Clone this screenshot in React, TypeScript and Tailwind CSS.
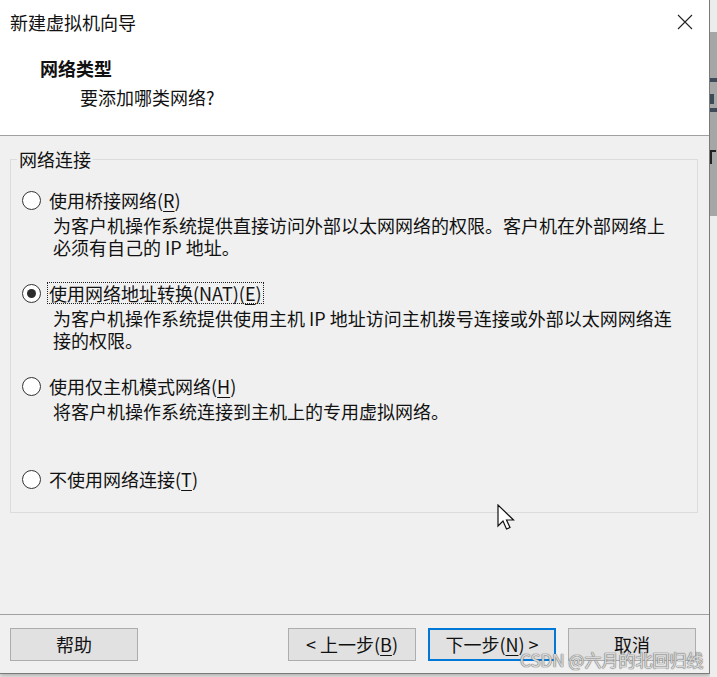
import type { ReactNode } from "react";

type NetOption = {
  id: string;
  label: ReactNode;
  desc: string[];
  checked?: boolean;
  focused?: boolean;
  gapTop: string;
};

function Key({ children }: { children: ReactNode }) {
  return <span className="underline decoration-1 underline-offset-[3px]">{children}</span>;
}

const options: NetOption[] = [
  {
    id: "bridged",
    label: (
      <>
        使用桥接网络(<Key>R</Key>)
      </>
    ),
    desc: ["为客户机操作系统提供直接访问外部以太网网络的权限。客户机在外部网络上", "必须有自己的 IP 地址。"],
    gapTop: "mt-0",
  },
  {
    id: "nat",
    label: (
      <>
        使用网络地址转换(NAT)(<Key>E</Key>)
      </>
    ),
    desc: ["为客户机操作系统提供使用主机 IP 地址访问主机拨号连接或外部以太网网络连", "接的权限。"],
    checked: true,
    focused: true,
    gapTop: "mt-[24px]",
  },
  {
    id: "hostonly",
    label: (
      <>
        使用仅主机模式网络(<Key>H</Key>)
      </>
    ),
    desc: ["将客户机操作系统连接到主机上的专用虚拟网络。"],
    gapTop: "mt-[24px]",
  },
  {
    id: "none",
    label: (
      <>
        不使用网络连接(<Key>T</Key>)
      </>
    ),
    desc: [],
    gapTop: "mt-[46px]",
  },
];

function Radio({ checked }: { checked?: boolean }) {
  return (
    <span className="flex h-[19px] w-[19px] shrink-0 items-center justify-center rounded-full border border-[#333] bg-white">
      {checked ? <span className="h-[9px] w-[9px] rounded-full bg-[#2b2b2b]" /> : null}
    </span>
  );
}

function OptionRow({ opt }: { opt: NetOption }) {
  return (
    <div className={opt.gapTop}>
      <div className="flex h-[22px] items-center gap-[6px]">
        <Radio checked={opt.checked} />
        <span
          className={
            opt.focused
              ? "border border-dotted border-[#222] px-px leading-[20px]"
              : "border border-transparent px-px leading-[20px]"
          }
        >
          {opt.label}
        </span>
      </div>
      {opt.desc.length > 0 ? (
        <div className="mt-[3px] pl-[31px]">
          {opt.desc.map((line) => (
            <p key={line} className="leading-[22px] whitespace-nowrap">
              {line}
            </p>
          ))}
        </div>
      ) : null}
    </div>
  );
}

function Button({ children, primary }: { children: ReactNode; primary?: boolean }) {
  return (
    <button
      type="button"
      className={
        primary
          ? "flex h-[33px] w-[128px] items-center justify-center border-2 border-[#0078d7] bg-[#e1e1e1] text-[18px] text-[#111]"
          : "flex h-[33px] w-[128px] items-center justify-center border border-[#adadad] bg-[#e1e1e1] text-[18px] text-[#111]"
      }
    >
      {children}
    </button>
  );
}

function Cursor() {
  return (
    <svg width="20" height="28" viewBox="0 0 20 28" className="absolute left-[497px] top-[504px]">
      <path
        d="M1 1 L1 22 L6 17 L9.5 25 L13 23.5 L9.5 16 L16.5 16 Z"
        fill="#fff"
        stroke="#111"
        strokeWidth="1.2"
        strokeLinejoin="miter"
      />
    </svg>
  );
}

export default function App() {
  return (
    <div className="relative flex h-[677px] w-[717px] overflow-hidden bg-[#eaeaea] font-['Noto_Sans_CJK_SC',sans-serif] text-[18px] text-[#111]">
      <div className="flex h-[674px] w-[710px] shrink-0 flex-col border-r border-b border-[#7a7a7a] shadow-[0_2px_4px_rgba(0,0,0,0.25)]">
        <header className="relative h-[136px] shrink-0 border-b border-[#a0a0a0] bg-white">
          <h1 className="pl-[10px] pt-[10px] text-[18px] leading-[24px] font-normal">新建虚拟机向导</h1>
          <svg width="16" height="16" viewBox="0 0 16 16" className="absolute right-[16px] top-[14px]">
            <path d="M1 1 L15 15 M15 1 L1 15" stroke="#222" strokeWidth="1.1" />
          </svg>
          <h2 className="mt-[22px] pl-[40px] text-[18px] leading-[24px] font-bold">网络类型</h2>
          <p className="mt-[5px] pl-[80px] leading-[24px]">要添加哪类网络?</p>
        </header>

        <main className="h-[478px] shrink-0 bg-[#f0f0f0] pt-[23px]">
          <section className="relative ml-[10px] h-[354px] w-[688px] border border-[#dcdcdc] pl-[11px] pt-[29px]">
            <span className="absolute left-[6px] top-[-12px] bg-[#f0f0f0] px-[2px] leading-[22px]">网络连接</span>
            {options.map((opt) => (
              <OptionRow key={opt.id} opt={opt} />
            ))}
          </section>
        </main>

        <footer className="flex flex-1 items-start border-t border-[#a0a0a0] bg-[#f0f0f0] pt-[13px] pl-[10px] pr-[13px]">
          <Button>帮助</Button>
          <div className="ml-auto flex gap-[12px]">
            <Button>
              &lt; 上一步(<Key>B</Key>)
            </Button>
            <Button primary>
              下一步(<Key>N</Key>) &gt;
            </Button>
            <Button>取消</Button>
          </div>
        </footer>
      </div>

      <div className="flex w-[7px] flex-col">
        <div className="h-[32px] bg-[#ececec]" />
        <div className="relative h-[184px] bg-[#a6a6a6]">
          <div className="absolute left-0 top-[46px] h-[4px] w-[7px] bg-[#3d4a58]" />
          <div className="absolute left-0 top-[62px] h-[10px] w-[4px] bg-[#3d4a58]" />
          <div className="absolute left-0 top-[76px] h-[4px] w-[7px] bg-[#3d4a58]" />
          <div className="absolute left-0 top-[118px] h-[14px] w-[6px] border-t-2 border-l-2 border-[#222]" />
        </div>
        <div className="flex-1 bg-[#ededed]" />
      </div>

      <Cursor />

      <span className="absolute left-[520px] top-[648px] text-[17px] leading-[24px] text-[rgba(235,235,235,0.85)] [text-shadow:0_0_1px_#777,0_0_1px_#777,0_0_1px_#777]">
        CSDN @六月的北回归线
      </span>
    </div>
  );
}
